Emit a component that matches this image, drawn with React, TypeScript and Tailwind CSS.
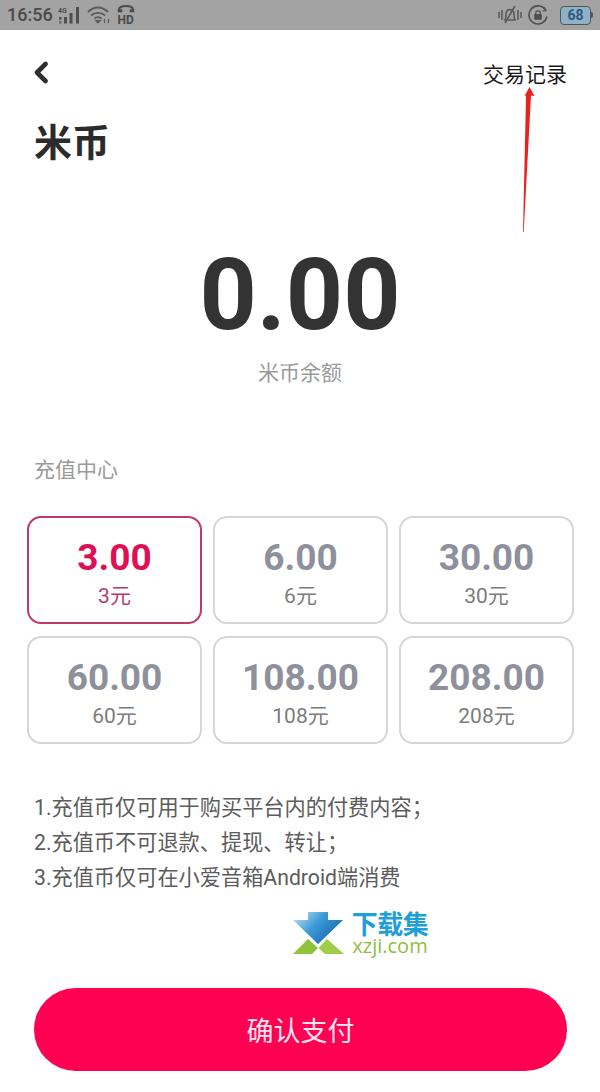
const FONT = "font-['Roboto','Noto_Sans_CJK_SC',sans-serif]";
const CJK = "font-['Noto_Sans_CJK_SC','Roboto',sans-serif]";

const plans = [
  ["3.00", "3元"],
  ["6.00", "6元"],
  ["30.00", "30元"],
  ["60.00", "60元"],
  ["108.00", "108元"],
  ["208.00", "208元"],
];

function StatusBar() {
  return (
    <div className="flex h-[30px] items-center justify-between bg-[#a3a3a3] pl-[7px] pr-[7px] text-[#4a4a4a]">
      <div className="flex items-center gap-[5px]">
        <span className="text-[18px] font-medium leading-none">16:56</span>
        <svg width="22" height="18" viewBox="0 0 22 18" fill="#4f4f4f">
          <text x="0" y="6.5" fontSize="7" fontWeight="700" fontFamily="Roboto">4G</text>
          <rect x="1" y="11" width="2.5" height="2.5" />
          <rect x="1" y="15" width="2.5" height="2.5" opacity="0.7" />
          <rect x="6" y="11" width="3" height="6.5" />
          <rect x="11.5" y="7" width="3" height="10.5" />
          <rect x="18" y="1" width="3" height="16.5" />
        </svg>
        <svg width="24" height="18" viewBox="0 0 24 18" fill="none" stroke="#5a5a5a" strokeWidth="1.8" className="ml-[2px]">
          <path d="M1 6 C7 0 15 0 21 6" />
          <path d="M4 9.5 C8 6 14 6 18 9.5" />
          <path d="M7.5 12.5 C9.5 11 12.5 11 14.5 12.5" />
          <path d="M9.5 15 L11 16.5 L12.5 15 Z" fill="#5a5a5a" />
          <path d="M17.5 13 L17.5 17 M21.5 13 L21.5 17" strokeWidth="1.2" />
        </svg>
        <svg width="20" height="26" viewBox="0 -3 20 26" fill="none" stroke="#4a4a4a">
          <path d="M3 6 V4.5 C3 1.5 6 1 10 1 C14 1 17 1.5 17 4.5 V6" strokeWidth="2" />
          <path d="M2 4.5 H6 V7 H2 Z M14 4.5 H18 V7 H14 Z" fill="#4a4a4a" strokeWidth="0.5" />
          <text x="1.5" y="19" fontSize="12" fontWeight="700" fontFamily="Roboto" fill="#4a4a4a" stroke="none">HD</text>
        </svg>
      </div>
      <div className="flex items-center gap-[6px]">
        <svg width="24" height="20" viewBox="0 0 24 20" fill="none" stroke="#5a5a5a" strokeWidth="1.6">
          <path d="M1 7 V13 M4 5 V15 M23 7 V13 M20 5 V15" />
          <path d="M7 15 C8.5 12 7.5 9 8.5 6.5 C9.5 4 14.5 4 15.5 6.5 C16.5 9 15.5 12 17 15 Z" />
          <path d="M7 18 L17 1" />
        </svg>
        <svg width="20" height="20" viewBox="0 0 20 20" fill="none" stroke="#4f4f4f" strokeWidth="1.6">
          <path d="M17.5 5 A9 9 0 1 0 18.8 11.5" />
          <path d="M16 2 L18 5.5 L14.5 6" strokeWidth="1.2" />
          <rect x="6.2" y="9" width="7.6" height="5.8" fill="#4f4f4f" stroke="none" rx="0.5" />
          <path d="M7.8 9 V7.5 C7.8 5.2 12.2 5.2 12.2 7.5 V9" strokeWidth="1.3" />
        </svg>
        <div className="ml-[6px] flex items-center">
          <div className="flex h-[19px] w-[31px] items-center justify-center rounded-[4px] border border-[#555555] bg-[#8fb1c6] text-[14px] font-bold leading-none text-[#2c5a80]">
            68
          </div>
          <div className="h-[6px] w-[2px] rounded-r-sm bg-[#555555]" />
        </div>
      </div>
    </div>
  );
}

function Logo() {
  return (
    <div className="flex h-[58px] items-center justify-end gap-[6px] pr-[171px]">
      <svg width="53" height="44" viewBox="0 0 53 44">
        <defs>
          <linearGradient id="blueArrow" x1="0" y1="0" x2="1" y2="0.6">
            <stop offset="0" stopColor="#d2e9f8" />
            <stop offset="0.5" stopColor="#3c9ad8" />
            <stop offset="1" stopColor="#1569ae" />
          </linearGradient>
        </defs>
        <path d="M16 1 H36 V9 H51 L26 33 L1 9 H16 Z" fill="url(#blueArrow)" />
        <path d="M1 43 L16 28 L26 37 L20 43 Z" fill="#90c33c" />
        <path d="M52 43 L35 28 L26.5 37 L33 43 Z" fill="#a0cc48" />
      </svg>
      <div className="flex w-[78px] flex-col items-center">
        <span className={`text-[26px] font-bold leading-[26px] tracking-[-0.5px] text-[#1f9fd8] ${CJK}`}>下载集</span>
        <span className="font-['Open_Sans',sans-serif] text-[20px] leading-[20px] text-[#8ebf3f]">xzji.com</span>
      </div>
    </div>
  );
}

export default function App() {
  return (
    <div className={`relative h-[1092px] w-[600px] overflow-hidden bg-white ${FONT}`}>
      <StatusBar />

      <div className="flex items-center justify-between px-[33px] pt-[30px]">
        <svg width="16" height="24" viewBox="0 0 16 24" fill="none" stroke="#2e2e2e" strokeWidth="4.6" strokeLinecap="round" strokeLinejoin="round">
          <path d="M12.5 3 L4 11.5 L12.5 20" />
        </svg>
        <span className={`text-[21px] leading-[26px] text-[#1a1a1a] ${CJK}`}>交易记录</span>
      </div>

      <h1 className={`pl-[34px] pt-[27px] text-[38px] font-bold leading-[54px] text-[#2b2b2b] ${CJK}`}>米币</h1>

      <div className="mt-[68px] text-center text-[100px] font-bold leading-[120px] text-[#333333]">0.00</div>
      <div className={`mt-[1px] text-center text-[21px] leading-[30px] text-[#9a9a9a] ${CJK}`}>米币余额</div>

      <div className={`pl-[34px] pt-[67px] text-[21px] leading-[30px] text-[#9a9a9a] ${CJK}`}>充值中心</div>

      <div className="ml-[27px] mt-[33px] grid w-[547px] grid-cols-[175px_175px_175px] gap-x-[11px] gap-y-[12px]">
        {plans.map(([amount, label], i) => {
          const on = i === 0;
          return (
            <div
              key={amount}
              className={`flex h-[108px] flex-col items-center rounded-[14px] border-2 pt-[18px] ${on ? "border-[#c2386b]" : "border-[#d6d6d8]"}`}
            >
              <span className={`text-[37px] font-bold leading-[44px] ${on ? "text-[#de0f57]" : "text-[#8e919c]"}`}>{amount}</span>
              <span className={`mt-[4px] text-[21px] leading-[24px] ${on ? "text-[#b23b72]" : "text-[#7c7c7c]"}`}>{label}</span>
            </div>
          );
        })}
      </div>

      <div className="mt-[46px] pl-[34px] text-[21.2px] leading-[35px] text-[#5c5c5c]">
        <p>1.充值币仅可用于购买平台内的付费内容；</p>
        <p>2.充值币不可退款、提现、转让；</p>
        <p>3.充值币仅可在小爱音箱Android端消费</p>
      </div>

      <div className="mt-[9px]">
        <Logo />
      </div>

      <div className="ml-[34px] mt-[26px] flex h-[83px] w-[533px] items-center justify-center rounded-full bg-[#ff0052]">
        <span className={`text-[27px] leading-none text-[#fde4ec] ${CJK}`}>确认支付</span>
      </div>

      <svg className="absolute left-[515px] top-[84px]" width="24" height="150" viewBox="0 0 24 150">
        <path d="M14.5 3 L19.5 12 L16 11.5 L8.7 148 L8 148 L11 11.5 L9.5 12 Z" fill="#e8231f" />
      </svg>
    </div>
  );
}
